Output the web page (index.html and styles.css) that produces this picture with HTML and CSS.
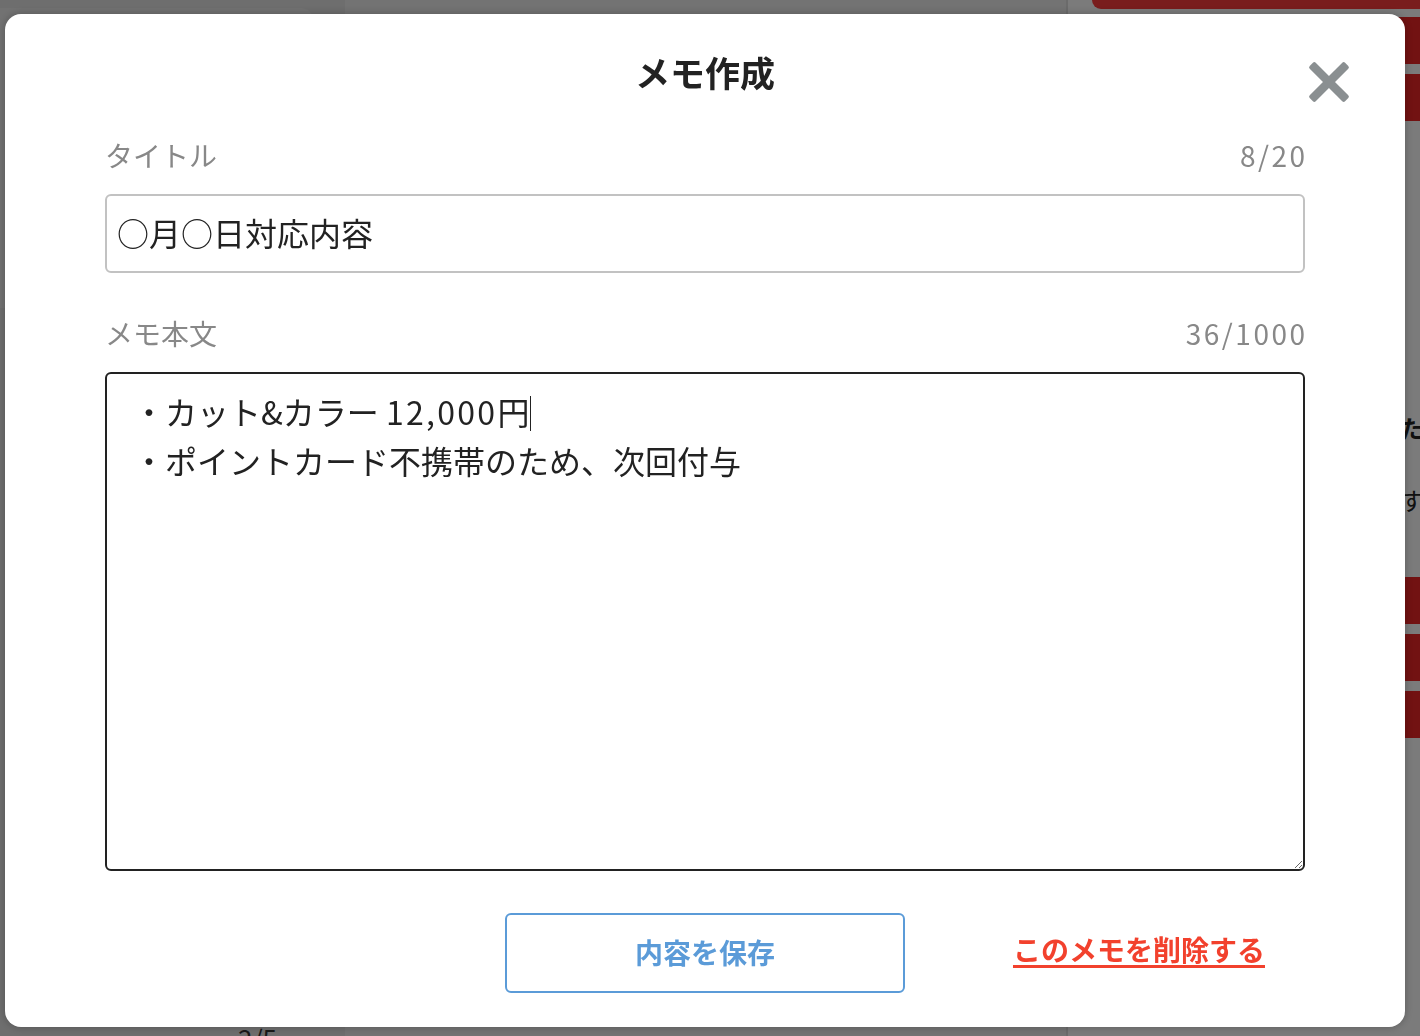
FILE: index.html
```html
<!DOCTYPE html>
<html lang="ja">
<head>
    <meta charset="UTF-8">
    <meta name="viewport" content="width=device-width, initial-scale=1.0">
    <title>メモ作成</title>
    <link rel="stylesheet" href="styles.css">
</head>
<body>
    <div class="page">
        <aside class="side">
            <div class="side-card"></div>
            <div class="pager">2/5</div>
        </aside>
        <main class="main"></main>
        <aside class="rail">
            <div class="rail-tab"></div>
            <div class="rail-btn"></div>
            <div class="rail-btn"></div>
            <p class="rail-head">ただいま</p>
            <p class="rail-text">すべて</p>
            <div class="rail-btn lower"></div>
            <div class="rail-btn"></div>
            <div class="rail-btn"></div>
        </aside>
    </div>

    <div class="overlay">
        <div class="modal">
            <header class="modal-head">
                <h1 class="modal-title">メモ作成</h1>
                <button class="close-button" aria-label="閉じる">
                    <svg width="42" height="42" viewBox="0 0 42 42">
                        <rect x="-4" y="16.75" width="50" height="8.5" rx="2" transform="rotate(45 21 21)" fill="#8a8f91"/>
                        <rect x="-4" y="16.75" width="50" height="8.5" rx="2" transform="rotate(-45 21 21)" fill="#8a8f91"/>
                    </svg>
                </button>
            </header>

            <div class="field">
                <div class="field-head">
                    <label class="field-label" for="memoTitle">タイトル</label>
                    <span class="field-count">8/20</span>
                </div>
                <input class="text-input" id="memoTitle" type="text" value="○月○日対応内容">
            </div>

            <div class="field">
                <div class="field-head">
                    <span class="field-label">メモ本文</span>
                    <span class="field-count">36/1000</span>
                </div>
                <div class="memo-body" role="textbox" aria-multiline="true">・カット&amp;カラー <span class="num">12,000</span>円<span class="caret"></span><br>・ポイントカード不携帯のため、次回付与</div>
            </div>

            <div class="actions">
                <button class="save-button">内容を保存</button>
                <a class="delete-link" href="#">このメモを削除する</a>
            </div>
        </div>
    </div>
</body>
</html>
```

FILE: styles.css
```css
body {
    margin: 0;
    font-family: "Noto Sans CJK JP", "Noto Sans", sans-serif;
    color: #222;
    overflow: hidden;
}

/* 背面のページ */
.page {
    display: grid;
    grid-template-columns: 345px 1fr 352px;
    height: 1036px;
    overflow: hidden;
    background-color: #ececec;
}
.side {
    background-color: #dcdcdc;
    display: flex;
    flex-direction: column;
    overflow: hidden;
}
.side-card {
    height: 300px;
    margin: 8px 32px 0 0;
    background-color: #e4e4e4;
    border-radius: 0 12px 0 0;
}
.pager {
    margin-top: auto;
    margin-bottom: -22px;
    padding-left: 238px;
    font-size: 26px;
    line-height: 40px;
    color: #333;
}
.main {
    background-color: #e6e6e6;
    border-right: 2px solid #d6d6d6;
}
.rail {
    background-color: #f6f6f6;
    display: flex;
    flex-direction: column;
    padding-left: 24px;
    white-space: nowrap;
    overflow: hidden;
}
.rail-tab {
    height: 9px;
    background-color: #f23a3a;
    border-radius: 0 0 0 10px;
}
.rail-btn {
    height: 47px;
    margin-top: 10px;
    background-color: #e42424;
}
.rail-tab + .rail-btn {
    margin-top: 8px;
}
.rail-btn.lower {
    margin-top: 60px;
}
.rail-head,
.rail-text {
    margin: 0;
    padding-left: 308px;
    font-size: 24px;
    line-height: 34px;
}
.rail-head {
    margin-top: 290px;
    font-weight: bold;
}
.rail-text {
    margin-top: 38px;
}

/* 背景を暗くしてモーダルを載せる */
.overlay {
    position: fixed;
    inset: 0;
    background-color: rgba(0, 0, 0, 0.5);
    padding: 14px 15px 9px 5px;
    display: flex;
}
.modal {
    flex: 1;
    position: relative;
    background-color: #fff;
    border-radius: 16px;
    box-shadow: 0 0 8px rgba(0, 0, 0, 0.25);
    padding: 38px 100px 0;
    display: flex;
    flex-direction: column;
}
.modal-head {
    height: 43px;
}
.modal-title {
    margin: 0;
    text-align: center;
    font-size: 35px;
    line-height: 40px;
    font-weight: bold;
    color: #222;
}
.close-button {
    position: absolute;
    top: 47px;
    right: 55px;
    width: 42px;
    height: 42px;
    padding: 0;
    border: none;
    background: none;
    cursor: pointer;
}
.close-button svg {
    display: block;
}
.field {
    margin-top: 43px;
}
.field-head {
    display: flex;
    justify-content: space-between;
    align-items: center;
    height: 34px;
    padding-bottom: 2px;
    margin-bottom: 20px;
    color: #888;
}
.field-label {
    font-size: 28px;
}
.field-count {
    font-size: 28px;
    letter-spacing: 2.5px;
    margin-right: -2.5px;
}
.text-input {
    display: block;
    box-sizing: border-box;
    width: 100%;
    height: 79px;
    padding: 0 10px 4px;
    border: 2px solid #c2c2c2;
    border-radius: 6px;
    font-family: inherit;
    font-size: 32px;
    color: #222;
    outline: none;
}
.memo-body {
    box-sizing: border-box;
    height: 499px;
    padding: 13px 26px;
    border: 2px solid #222;
    border-radius: 6px;
    font-size: 32px;
    line-height: 49px;
    color: #222;
    overflow: auto;
    resize: vertical;
    white-space: nowrap;
}
.memo-body .num {
    letter-spacing: 2.3px;
}
.caret {
    display: inline-block;
    width: 0;
    height: 35px;
    margin-left: 1px;
    border-left: 1.5px solid #222;
    vertical-align: -6px;
}
.actions {
    display: grid;
    grid-template-columns: 1fr 400px 1fr;
    align-items: center;
    margin-top: 42px;
}
.save-button {
    grid-column: 2;
    height: 80px;
    padding-bottom: 3px;
    border: 2px solid #5b9bd8;
    border-radius: 6px;
    background-color: #fff;
    color: #5b9bd8;
    font-family: inherit;
    font-size: 28px;
    font-weight: bold;
    cursor: pointer;
}
.delete-link {
    justify-self: end;
    margin-right: 40px;
    margin-bottom: 8px;
    color: #f2412d;
    font-size: 28px;
    font-weight: bold;
    text-decoration: underline;
    text-decoration-thickness: 3px;
    text-underline-offset: 4px;
}
```
